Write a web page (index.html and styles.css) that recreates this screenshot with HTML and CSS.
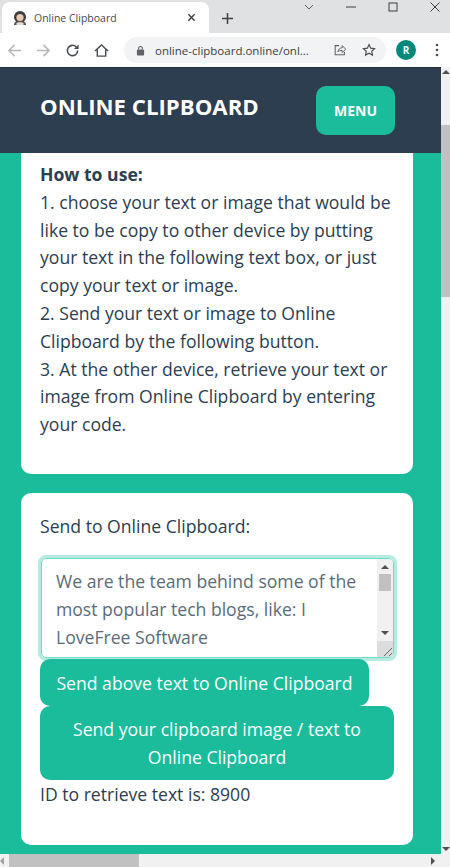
FILE: index.html
```html
<!DOCTYPE html>
<html lang="en">
<head>
    <meta charset="UTF-8">
    <meta name="viewport" content="width=device-width, initial-scale=1.0">
    <title>Online Clipboard</title>
    <link rel="stylesheet" href="styles.css">
</head>
<body>
    <div class="tabstrip">
        <div class="tab">
            <svg class="favicon" viewBox="0 0 16 16">
                <circle cx="8" cy="7" r="6" fill="#3f3a3c"/>
                <path d="M2 15c0-3 2-4 6-4s6 1 6 4z" fill="#5b5557"/>
                <circle cx="8" cy="7.5" r="3.6" fill="#eac9b4"/>
                <path d="M4.5 13c1-1 6-1 7 0v2h-7z" fill="#e9dcd6"/>
            </svg>
            <span class="tab-title">Online Clipboard</span>
            <svg class="tab-close" viewBox="0 0 10 10"><path d="M1.5 1.5l7 7M8.500 1.500l-7 7" stroke="#3c4043" stroke-width="1.500"/></svg>
        </div>
        <svg class="new-tab" viewBox="0 0 12 12"><path d="M6 0v12M0 6h12" stroke="#3c4043" stroke-width="1.600"/></svg>
        <div class="window-controls">
            <svg class="win-icon" viewBox="0 0 12 12"><path d="M2 4l4 4 4-4" fill="none" stroke="#5f6368" stroke-width="1"/></svg>
            <svg class="win-icon" viewBox="0 0 12 12"><path d="M1 6h10" stroke="#3c4043" stroke-width="1"/></svg>
            <svg class="win-icon" viewBox="0 0 12 12"><rect x="2" y="2" width="8" height="8" fill="none" stroke="#3c4043" stroke-width="1"/></svg>
            <svg class="win-icon" viewBox="0 0 12 12"><path d="M1.500 1.500l9 9M10.500 1.500l-9 9" stroke="#3c4043" stroke-width="1"/></svg>
        </div>
    </div>

    <div class="toolbar">
        <svg class="tool-icon" viewBox="0 0 16 16"><path d="M15 8H2M8 2L2 8l6 6" fill="none" stroke="#b4b7bb" stroke-width="1.600"/></svg>
        <svg class="tool-icon" viewBox="0 0 16 16"><path d="M1 8h13M8 2l6 6-6 6" fill="none" stroke="#b4b7bb" stroke-width="1.600"/></svg>
        <svg class="tool-icon" viewBox="0 0 16 16"><path d="M13.500 8a5.500 5.500 0 1 1-1.600-3.900" fill="none" stroke="#4a4d51" stroke-width="1.700"/><path d="M14.500 1.500v5h-5z" fill="#4a4d51"/></svg>
        <svg class="tool-icon" viewBox="0 0 16 16"><path d="M1 8.500L8 2l7 6.500M3.500 7v7h9V7" fill="none" stroke="#4a4d51" stroke-width="1.500"/></svg>
        <div class="omnibox">
            <svg class="lock" viewBox="0 0 10 12"><path d="M3 5V3.500a2 2 0 0 1 4 0V5" fill="none" stroke="#5f6368" stroke-width="1.200"/><rect x="1" y="5" width="8" height="6.500" rx="1" fill="#5f6368"/></svg>
            <span class="url">online-clipboard.online/onl...</span>
            <svg class="omni-icon" viewBox="0 0 16 16"><path d="M7 3H2.500v10.500h10.500V10" fill="none" stroke="#5f6368" stroke-width="1.200"/><path d="M5.500 10c.5-3 2.500-4.500 5-4.500V3l4 4-4 4V8.500c-2 0-3.500.3-5 1.500z" fill="none" stroke="#5f6368" stroke-width="1.100"/></svg>
            <svg class="omni-icon" viewBox="0 0 16 16"><path d="M8 1.800l1.900 4.100 4.500.5-3.300 3 .9 4.400L8 11.600l-4 2.200.9-4.400-3.300-3 4.500-.5z" fill="none" stroke="#4a4d51" stroke-width="1.300"/></svg>
        </div>
        <div class="avatar">R</div>
        <svg class="kebab" viewBox="0 0 4 14"><circle cx="2" cy="2" r="1.300" fill="#4a4d51"/><circle cx="2" cy="7" r="1.300" fill="#4a4d51"/><circle cx="2" cy="12" r="1.300" fill="#4a4d51"/></svg>
    </div>

    <div class="window">
        <div class="viewport">
            <nav class="navbar">
                <div class="brand">ONLINE CLIPBOARD</div>
                <button class="menu-btn">MENU</button>
            </nav>
            <div class="content">
                <section class="card card-help">
                    <b>How to use:</b><br>
                    1. choose your text or image that would be like to be copy to other device by putting your text in the following text box, or just copy your text or image.<br>
                    2. Send your text or image to Online Clipboard by the following button.<br>
                    3. At the other device, retrieve your text or image from Online Clipboard by entering your code.
                </section>
                <section class="card card-send">
                    <p class="send-label">Send to Online Clipboard:</p>
                    <div class="textbox">
                        <div class="textbox-text">We are the team behind some of the most popular tech blogs, like: I LoveFree Software</div>
                        <div class="textbox-scroll">
                            <span class="arrow-up"></span>
                            <span class="textbox-thumb"></span>
                            <span class="arrow-down"></span>
                            <svg class="resizer" viewBox="0 0 16 16"><path d="M15 7l-8 8M15 12l-3 3" stroke="#666" stroke-width="1"/></svg>
                        </div>
                    </div>
                    <button class="btn btn-text">Send above text to Online Clipboard</button>
                    <button class="btn btn-image">Send your clipboard image / text to Online Clipboard</button>
                    <p class="retrieve">ID to retrieve text is: 8900</p>
                </section>
            </div>
        </div>
        <div class="vscroll">
            <span class="arrow-up"></span>
            <span class="vthumb"></span>
            <span class="arrow-down"></span>
        </div>
    </div>

    <div class="hscroll">
        <span class="arrow-left"></span>
        <span class="hthumb"></span>
        <span class="arrow-right"></span>
    </div>
</body>
</html>
```

FILE: styles.css
```css
* {
    box-sizing: border-box;
}

body {
    margin: 0;
    width: 450px;
    height: 867px;
    overflow: hidden;
    display: flex;
    flex-direction: column;
    font-family: "Open Sans", "Noto Sans", sans-serif;
    color: #2c3e50;
    background-color: #fff;
}

/* browser chrome */
.tabstrip {
    height: 33px;
    flex: none;
    display: flex;
    align-items: flex-end;
    background-color: #dfe1e3;
    position: relative;
}

.tab {
    width: 207px;
    height: 31px;
    margin-left: 2px;
    padding: 0 10px;
    display: flex;
    align-items: center;
    background-color: #fff;
    border-radius: 8px 8px 0 0;
}

.favicon {
    width: 16px;
    height: 16px;
    margin-right: 6px;
}

.tab-title {
    flex: 1;
    font-size: 10.5px;
    color: #45494d;
}

.tab-close {
    width: 9px;
    height: 9px;
    margin-right: 3px;
}

.new-tab {
    width: 11px;
    height: 11px;
    margin: 0 0 9px 13px;
}

.window-controls {
    position: absolute;
    top: 1px;
    right: 9px;
    display: flex;
    gap: 30px;
}

.win-icon {
    width: 12px;
    height: 12px;
}

.toolbar {
    height: 34px;
    flex: none;
    display: flex;
    align-items: center;
    padding-left: 7px;
    background-color: #fff;
}

.tool-icon {
    width: 15px;
    height: 15px;
    margin-right: 14px;
}

.omnibox {
    width: 262px;
    height: 26px;
    margin-left: 1px;
    padding: 0 10px 0 12px;
    display: flex;
    align-items: center;
    background-color: #f1f3f4;
    border-radius: 13px;
}

.lock {
    width: 9px;
    height: 11px;
    margin-right: 10px;
}

.url {
    flex: 1;
    font-size: 11.5px;
    color: #3c4043;
    white-space: nowrap;
}

.omni-icon {
    width: 14px;
    height: 14px;
    margin-left: 15px;
}

.avatar {
    width: 20px;
    height: 20px;
    margin-left: 10px;
    border-radius: 50%;
    background-color: #00897b;
    color: #fff;
    font-size: 10px;
    font-weight: 700;
    line-height: 20px;
    text-align: center;
}

.kebab {
    width: 4px;
    height: 14px;
    margin-left: 19px;
}

/* page */
.window {
    flex: 1;
    min-height: 0;
    display: flex;
}

.viewport {
    flex: 1;
    min-width: 0;
    display: flex;
    flex-direction: column;
    background-color: #1abc9c;
    overflow: hidden;
}

.navbar {
    height: 86px;
    flex: none;
    padding: 18px 46px 0 40px;
    display: flex;
    justify-content: space-between;
    align-items: flex-start;
    background-color: #2c3e50;
    border-top: 1px solid #24323f;
}

.brand {
    margin-top: 1px;
    font-size: 22.2px;
    font-weight: 700;
    line-height: 40px;
    color: #fff;
    white-space: nowrap;
}

.menu-btn {
    width: 79px;
    height: 49px;
    border: none;
    border-radius: 10px;
    background-color: #1abc9c;
    color: #fff;
    font-family: inherit;
    font-size: 14px;
    font-weight: 700;
}

.content {
    padding: 0 28px 0 21px;
}

.card {
    background-color: #fff;
    font-size: 17.6px;
    line-height: 27.8px;
    padding: 0 19px;
}

.card-help {
    height: 321px;
    padding-top: 8px;
    border-radius: 0 0 10px 10px;
}

.card-send {
    height: 352px;
    margin-top: 19px;
    padding-top: 20px;
    border-radius: 10px;
}

.send-label {
    margin: 0 0 17px;
}

.textbox {
    width: 353px;
    height: 100px;
    margin-left: 1px;
    display: flex;
    border: 1px solid #6fdcc7;
    border-radius: 5px;
    box-shadow: 0 0 0 3px #b5ebe0;
    overflow: hidden;
}

.textbox-text {
    flex: 1;
    padding: 8px 14px 0;
    font-size: 17.6px;
    line-height: 28px;
    color: #5b6b79;
}

.textbox-scroll {
    width: 16px;
    flex: none;
    position: relative;
    background-color: #f1f1f1;
}

.textbox-thumb {
    position: absolute;
    top: 15px;
    left: 2px;
    width: 12px;
    height: 17px;
    background-color: #c1c1c1;
}

.textbox-scroll .arrow-up {
    position: absolute;
    top: 6px;
    left: 4px;
}

.textbox-scroll .arrow-down {
    position: absolute;
    top: 72px;
    left: 4px;
}

.resizer {
    position: absolute;
    bottom: 0;
    left: 0;
    width: 16px;
    height: 16px;
    background-color: #dcdcdc;
}

.arrow-up,
.arrow-down,
.arrow-left,
.arrow-right {
    display: block;
    width: 0;
    height: 0;
    border-style: solid;
    border-color: transparent;
}

.arrow-up {
    border-width: 0 4px 4px;
    border-bottom-color: #505050;
}

.arrow-down {
    border-width: 4px 4px 0;
    border-top-color: #505050;
}

.arrow-left {
    border-width: 4px 4px 4px 0;
    border-right-color: #a0a0a0;
}

.arrow-right {
    border-width: 4px 0 4px 4px;
    border-left-color: #505050;
}

.btn {
    display: block;
    border: none;
    background-color: #1abc9c;
    color: #fff;
    font-family: inherit;
    font-size: 17.6px;
    line-height: 28px;
    border-radius: 10px;
}

.btn-text {
    width: 329px;
    height: 47px;
    margin-top: 1px;
    padding-top: 3px;
}

.btn-image {
    width: 354px;
    height: 74px;
    margin-top: 0;
    padding: 1px 20px 0;
}

.retrieve {
    margin: 1px 0 0;
}

/* scrollbars */
.vscroll {
    width: 9px;
    flex: none;
    position: relative;
    background-color: #f1f1f1;
}

.vscroll .arrow-up {
    position: absolute;
    top: 3px;
    left: 1px;
}

.vthumb {
    position: absolute;
    top: 58px;
    left: 0;
    width: 9px;
    height: 172px;
    background-color: #c1c1c1;
}

.vscroll .arrow-down {
    position: absolute;
    bottom: 3px;
    left: 1px;
}

.hscroll {
    height: 13px;
    flex: none;
    display: flex;
    align-items: center;
    position: relative;
    background-color: #f1f1f1;
}

.hthumb {
    width: 130px;
    height: 13px;
    margin-left: 5px;
    background-color: #c1c1c1;
}

.hscroll .arrow-right {
    position: absolute;
    left: 431px;
    top: 3px;
}
```
